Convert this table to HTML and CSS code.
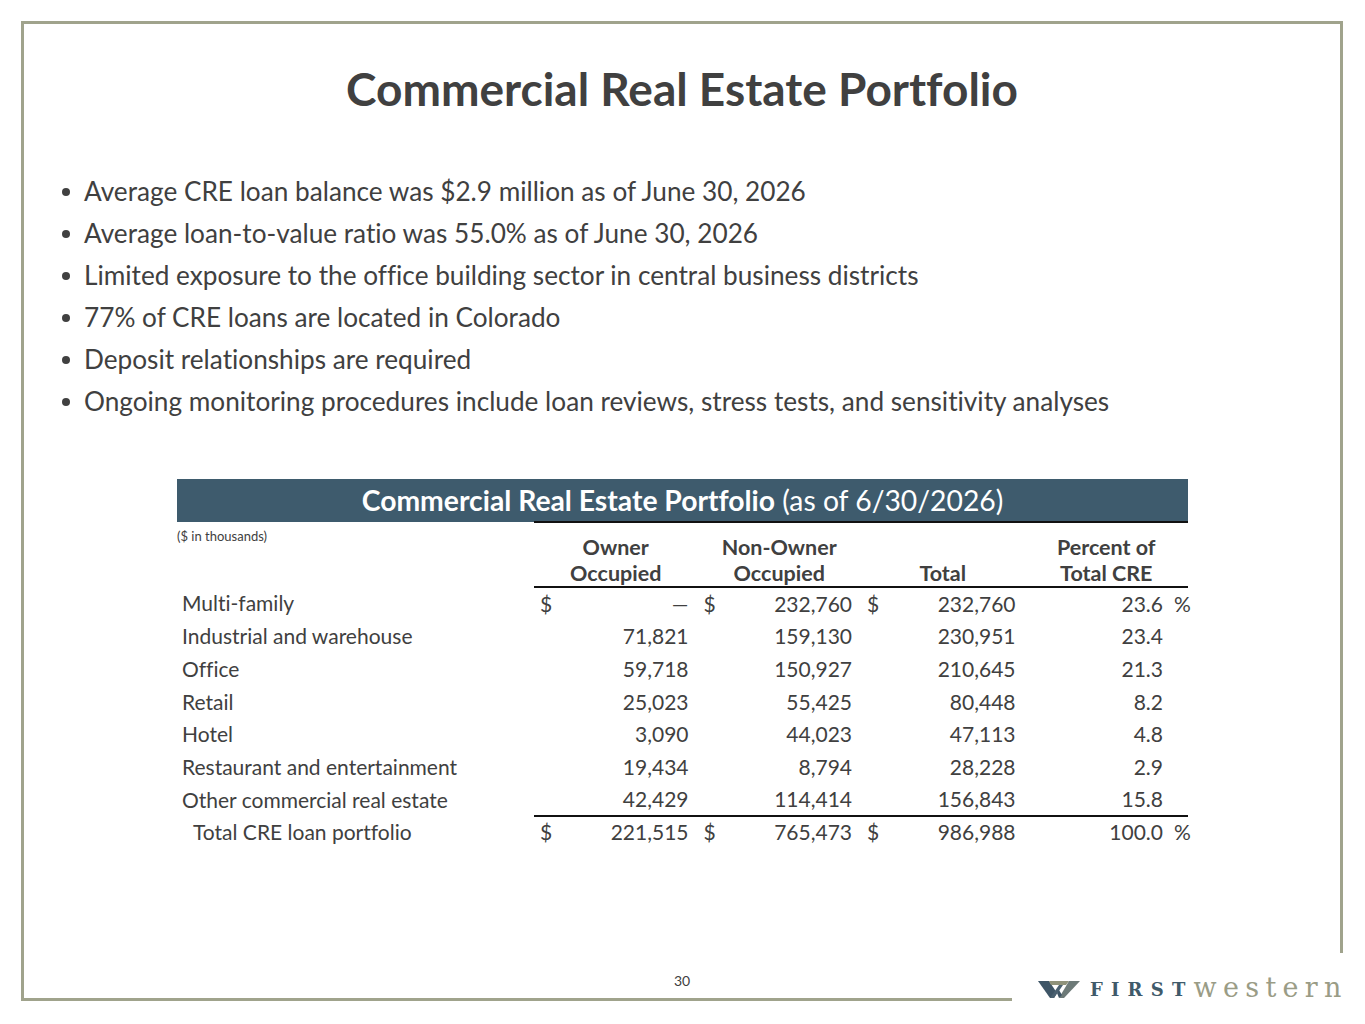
FILE: index.html
```html
<!DOCTYPE html>
<html>
<head>
<meta charset="utf-8">
<link rel="stylesheet" href="styles.css">
</head>
<body>
<div class="page">
  <div class="frame">
    <h1 class="title">Commercial Real Estate Portfolio</h1>
    <ul class="bullets">
      <li>Average CRE loan balance was $2.9 million as of June 30, 2026</li>
      <li>Average loan-to-value ratio was 55.0% as of June 30, 2026</li>
      <li>Limited exposure to the office building sector in central business districts</li>
      <li>77% of CRE loans are located in Colorado</li>
      <li>Deposit relationships are required</li>
      <li>Ongoing monitoring procedures include loan reviews, stress tests, and sensitivity analyses</li>
    </ul>
    <table class="cre">
      <colgroup>
        <col class="c-label"><col class="c-num"><col class="c-num"><col class="c-num"><col class="c-num">
      </colgroup>
      <thead>
        <tr class="bar"><th colspan="5"><b>Commercial Real Estate Portfolio</b> (as of 6/30/2026)</th></tr>
        <tr class="heads">
          <th class="units">($ in thousands)</th>
          <th class="ch">Owner<br>Occupied</th>
          <th class="ch">Non-Owner<br>Occupied</th>
          <th class="ch">Total</th>
          <th class="ch">Percent of<br>Total CRE</th>
        </tr>
      </thead>
      <tbody>
        <tr>
          <td class="lbl">Multi-family</td>
          <td><div class="m"><span>$</span><span>—</span></div></td>
          <td><div class="m"><span>$</span><span>232,760</span></div></td>
          <td><div class="m"><span>$</span><span>232,760</span></div></td>
          <td><div class="p"><span>23.6</span><span class="pc">%</span></div></td>
        </tr>
        <tr>
          <td class="lbl">Industrial and warehouse</td>
          <td><div class="m"><span></span><span>71,821</span></div></td>
          <td><div class="m"><span></span><span>159,130</span></div></td>
          <td><div class="m"><span></span><span>230,951</span></div></td>
          <td><div class="p"><span>23.4</span><span class="pc"></span></div></td>
        </tr>
        <tr>
          <td class="lbl">Office</td>
          <td><div class="m"><span></span><span>59,718</span></div></td>
          <td><div class="m"><span></span><span>150,927</span></div></td>
          <td><div class="m"><span></span><span>210,645</span></div></td>
          <td><div class="p"><span>21.3</span><span class="pc"></span></div></td>
        </tr>
        <tr>
          <td class="lbl">Retail</td>
          <td><div class="m"><span></span><span>25,023</span></div></td>
          <td><div class="m"><span></span><span>55,425</span></div></td>
          <td><div class="m"><span></span><span>80,448</span></div></td>
          <td><div class="p"><span>8.2</span><span class="pc"></span></div></td>
        </tr>
        <tr>
          <td class="lbl">Hotel</td>
          <td><div class="m"><span></span><span>3,090</span></div></td>
          <td><div class="m"><span></span><span>44,023</span></div></td>
          <td><div class="m"><span></span><span>47,113</span></div></td>
          <td><div class="p"><span>4.8</span><span class="pc"></span></div></td>
        </tr>
        <tr>
          <td class="lbl">Restaurant and entertainment</td>
          <td><div class="m"><span></span><span>19,434</span></div></td>
          <td><div class="m"><span></span><span>8,794</span></div></td>
          <td><div class="m"><span></span><span>28,228</span></div></td>
          <td><div class="p"><span>2.9</span><span class="pc"></span></div></td>
        </tr>
        <tr class="last">
          <td class="lbl">Other commercial real estate</td>
          <td><div class="m"><span></span><span>42,429</span></div></td>
          <td><div class="m"><span></span><span>114,414</span></div></td>
          <td><div class="m"><span></span><span>156,843</span></div></td>
          <td><div class="p"><span>15.8</span><span class="pc"></span></div></td>
        </tr>
        <tr class="total">
          <td class="lbl">Total CRE loan portfolio</td>
          <td><div class="m"><span>$</span><span>221,515</span></div></td>
          <td><div class="m"><span>$</span><span>765,473</span></div></td>
          <td><div class="m"><span>$</span><span>986,988</span></div></td>
          <td><div class="p"><span>100.0</span><span class="pc">%</span></div></td>
        </tr>
      </tbody>
    </table>
    <div class="pageno">30</div>
  </div>
  <div class="logo">
    <svg class="logo-mark" viewBox="0 0 42 17" width="42" height="17" aria-hidden="true">
      <polygon points="0,0 11,0 19,12 16,17 12,17" fill="#3e5566"/>
      <polygon points="11,0 31,0 28,4 13,4" fill="#8f927a"/>
      <polygon points="12,17 16,17 25,4 21,4" fill="#4a6070"/>
      <polygon points="21,17 26,17 42,0 31,0" fill="#6d7a78"/>
      <polygon points="19,12 21,9 24,14 21,17" fill="#3e5566"/>
    </svg>
    <span class="logo-first">FIRST</span><span class="logo-western">western</span>
  </div>
</div>
</body>
</html>
```

FILE: styles.css
```css
* { box-sizing: border-box; }
html, body { margin: 0; padding: 0; background: #fff; }
body {
  font-family: "Lato", "Liberation Sans", sans-serif;
  color: #404040;
  font-variant-ligatures: none;
}

.page {
  position: relative;
  width: 1365px;
  height: 1024px;
  padding: 21px 0 0 21px;
}

.frame {
  width: 1322px;
  height: 980px;
  border: 3px solid #a0a38c;
  display: flex;
  flex-direction: column;
}

.title {
  margin: 37px 0 0;
  font-size: 46px;
  line-height: 55px;
  font-weight: 700;
  text-align: center;
  color: #404040;
}

.bullets {
  margin: 54px 0 0;
  padding: 0 0 0 60px;
  list-style: none;
}
.bullets li {
  position: relative;
  font-size: 26.2px;
  line-height: 42px;
}
.bullets li::before {
  content: "";
  position: absolute;
  left: -22px;
  top: 18px;
  width: 8px;
  height: 8px;
  border-radius: 50%;
  background: #404040;
}

.cre {
  margin: 57px 0 0 153px;
  width: 1011px;
  border-collapse: collapse;
  table-layout: fixed;
  font-size: 21px;
}
.c-label { width: 357px; }
.c-num { width: 163.5px; }

.bar th {
  background: #3e5b6d;
  color: #fff;
  font-size: 28.3px;
  font-weight: 400;
  height: 42px;
  padding: 0;
  text-align: center;
  line-height: 42px;
}
.bar th b { font-weight: 700; }

.heads th {
  vertical-align: bottom;
  padding: 0;
  height: 65px;
}
.heads .units {
  vertical-align: top;
  text-align: left;
  font-size: 13px;
  font-weight: 400;
  padding-top: 7px;
  line-height: 14px;
}
.heads .ch {
  font-size: 21.5px;
  font-weight: 700;
  line-height: 26px;
  text-align: center;
  border-top: 2px solid #111;
  border-bottom: 2px solid #111;
}

.cre td {
  padding: 0;
  height: 32.75px;
  line-height: 24px;
  vertical-align: middle;
}
.cre .last td { height: 32px; }
.cre .lbl { padding-left: 5px; }
.cre .total .lbl { padding-left: 16px; }
.cre .last td:not(.lbl) { border-bottom: 2px solid #111; }

.m {
  display: flex;
  justify-content: space-between;
  padding: 0 9px 0 6px;
}
.p {
  display: flex;
  justify-content: flex-end;
}
.pc {
  width: 25px;
  padding-left: 11px;
}

.pageno {
  margin-top: auto;
  text-align: center;
  font-size: 14px;
  line-height: 18px;
  padding-bottom: 8px;
}

.logo {
  position: absolute;
  left: 1012px;
  top: 953px;
  width: 353px;
  height: 71px;
  background: #fff;
  display: flex;
  align-items: flex-end;
  padding: 0 0 25px 26px;
  line-height: 1;
}
.logo-mark { display: block; margin-bottom: 1px; margin-right: 10px; }
.logo-first {
  font-family: "DejaVu Serif", "Liberation Serif", serif;
  font-weight: 700;
  font-size: 18px;
  letter-spacing: 8.2px;
  color: #3f5a6a;
}
.logo-western {
  font-family: "DejaVu Serif", "Liberation Serif", serif;
  font-size: 27px;
  letter-spacing: 6.3px;
  color: #9a9c86;
  margin-bottom: -2px;
}
```
